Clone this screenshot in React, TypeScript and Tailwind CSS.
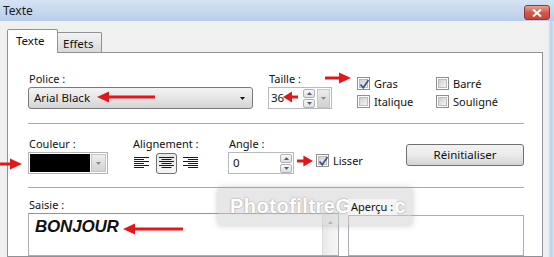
import React from 'react';

type Dir = 'left' | 'right';

function RedArrow({ len, dir }: { len: number; dir: Dir }) {
  const head = Math.min(12, len * 0.6);
  const shaft =
    dir === 'left' ? `M${head - 1} 4.5 H${len} V7.5 H${head - 1} Z` : `M0 4.5 H${len - head + 1} V7.5 H0 Z`;
  const tip =
    dir === 'left' ? `M0 6 L${head} 0.5 L${head} 11.5 Z` : `M${len} 6 L${len - head} 0.5 L${len - head} 11.5 Z`;
  return (
    <svg width={len} height={12} viewBox={`0 0 ${len} 12`}>
      <path d={shaft} fill="#e3161c" />
      <path d={tip} fill="#e3161c" />
    </svg>
  );
}

function CheckBox({ checked }: { checked?: boolean }) {
  return (
    <span className="relative w-[13px] h-[13px] border border-[#8f8f8f] bg-white p-px shrink-0">
      <span className="block w-full h-full bg-gradient-to-br from-[#cfcfcf] to-[#f6f6f6] border border-[#bcbcbc]" />
      {checked && (
        <svg className="absolute left-0 top-0" width="13" height="13" viewBox="0 0 13 13">
          <path d="M2.5 6.5 L5.2 9.8 L10.5 2" fill="none" stroke="#3e5594" strokeWidth="1.8" />
        </svg>
      )}
    </span>
  );
}

function Check({ label, checked }: { label: string; checked?: boolean }) {
  return (
    <div className="flex items-center gap-[4px] h-[13px] leading-none">
      <CheckBox checked={checked} />
      <span>{label}</span>
    </div>
  );
}

function TinyTri({ up, color = '#4b5f86' }: { up?: boolean; color?: string }) {
  return (
    <svg width="5" height="3" viewBox="0 0 5 3">
      <path d={up ? 'M0 3 L2.5 0 L5 3 Z' : 'M0 0 L2.5 3 L5 0 Z'} fill={color} />
    </svg>
  );
}

function Spinner() {
  return (
    <div className="flex flex-col gap-px py-px">
      <div className="w-[12px] h-[9px] border border-[#b2b2b2] rounded-[2px] bg-gradient-to-b from-[#f8f8f8] to-[#dedede] flex items-center justify-center">
        <TinyTri up />
      </div>
      <div className="w-[12px] h-[9px] border border-[#b2b2b2] rounded-[2px] bg-gradient-to-b from-[#f8f8f8] to-[#dedede] flex items-center justify-center">
        <TinyTri />
      </div>
    </div>
  );
}

function AlignIcon({ mode }: { mode: 'left' | 'center' | 'right' }) {
  const rows = [0, 1, 2, 3, 4, 5];
  return (
    <svg width="15" height="12" viewBox="0 0 15 12">
      {rows.map((i) => {
        const w = i % 2 === 0 ? 15 : 10;
        const x = mode === 'left' ? 0 : mode === 'center' ? (15 - w) / 2 : 15 - w;
        return <rect key={i} x={x} y={i * 2} width={w} height={1} fill="#1a1a1a" />;
      })}
    </svg>
  );
}

export default function App() {
  return (
    <div className="relative w-[554px] h-[257px] overflow-hidden bg-[#f0f0f0] font-['Noto_Sans',sans-serif] text-[11px] text-[#111] flex flex-col">
      {/* Title bar */}
      <div className="h-[21px] shrink-0 bg-gradient-to-b from-[#d6e3f3] to-[#b8cee9] flex items-center justify-between pl-[3px] pr-[4px]">
        <span className="text-[12px] text-[#1b1b1b]">Texte</span>
        <div className="mt-[4px] w-[26px] h-[15px] rounded-[3px] border border-[#8d3a36] bg-gradient-to-b from-[#e8a393] via-[#cf5a4b] to-[#c4463a] flex items-center justify-center">
          <svg width="10" height="8" viewBox="0 0 10 8">
            <path d="M1 0.5 L9 7.5 M9 0.5 L1 7.5" stroke="#fff" strokeWidth="2" />
          </svg>
        </div>
      </div>

      <div className="flex-1 flex">
        <div className="flex-1 pl-[7px] pt-[8px] flex flex-col">
          {/* Tabs */}
          <div className="flex items-end h-[23px] relative z-10">
            <div className="w-[51px] h-[24px] -mb-px bg-white border border-b-0 border-[#8e9199] rounded-t-[2px] pl-[8px] pt-[2px] text-[11.5px]">
              Texte
            </div>
            <div className="w-[44px] h-[20px] bg-gradient-to-b from-[#f3f3f3] to-[#dadada] border border-l-0 border-b-0 border-[#8e9199] rounded-tr-[2px] pl-[5px] pt-[2px] text-[11.5px]">
              Effets
            </div>
          </div>

          {/* Panel */}
          <div className="w-[536px] flex-1 bg-white border border-[#8e9199] pl-[20px] pt-[19px] flex flex-col">
            {/* Row 1 */}
            <div className="flex h-[37px]">
              <div className="w-[225px] flex flex-col">
                <span className="h-[15px] leading-[13px] pl-px">Police :</span>
                <div className="h-[22px] rounded-[3px] border border-[#7a7a7a] bg-gradient-to-b from-[#f3f3f3] via-[#e6e6e6] to-[#d4d4d4] flex items-center justify-between pl-[5px] pr-[7px]">
                  <span className="text-[11.5px]">Arial Black</span>
                  <TinyTri color="#111" />
                </div>
              </div>
              <div className="ml-[15px] flex flex-col">
                <span className="h-[15px] leading-[13px] pl-px">Taille :</span>
                <div className="h-[22px] w-[64px] border border-[#b6b9c1] bg-white flex items-center pl-[2px] pr-px">
                  <span className="w-[33px] text-[11.5px]">36</span>
                  <Spinner />
                  <div className="ml-[2px] w-[13px] h-[19px] border border-[#c7c7c7] bg-gradient-to-b from-[#ececec] to-[#d0d0d0] flex items-center justify-center">
                    <TinyTri color="#8a8a8a" />
                  </div>
                </div>
              </div>
              <div className="ml-[25px] w-[79px] pt-[5px] flex flex-col gap-[5px]">
                <Check label="Gras" checked />
                <Check label="Italique" />
              </div>
              <div className="pt-[5px] flex flex-col gap-[5px]">
                <Check label="Barré" />
                <Check label="Souligné" />
              </div>
            </div>

            <div className="mt-[14px] w-[496px] h-px bg-[#a7a7a7]" />

            {/* Row 2 */}
            <div className="mt-[13px] flex h-[37px] w-[496px]">
              <div className="w-[80px] flex flex-col">
                <span className="h-[15px] leading-[13px] pl-px">Couleur :</span>
                <div className="h-[22px] border border-[#b3b3b3] bg-white flex items-center p-px">
                  <div className="w-[61px] h-[18px] bg-black" />
                  <div className="ml-px w-[15px] h-[18px] border border-[#c4c4c4] bg-gradient-to-b from-[#eeeeee] to-[#d3d3d3] flex items-center justify-center">
                    <TinyTri color="#888" />
                  </div>
                </div>
              </div>
              <div className="ml-[25px] w-[70px] flex flex-col">
                <span className="h-[15px] leading-[13px]">Alignement :</span>
                <div className="h-[22px] flex items-center">
                  <span className="ml-px">
                    <AlignIcon mode="left" />
                  </span>
                  <div className="ml-[7px] w-[21px] h-[21px] rounded-[3px] border border-[#6f6f6f] bg-gradient-to-b from-[#e6e6e6] to-[#f5f5f5] flex items-center justify-center">
                    <AlignIcon mode="center" />
                  </div>
                  <span className="ml-[6px]">
                    <AlignIcon mode="right" />
                  </span>
                </div>
              </div>
              <div className="ml-[25px] flex flex-col">
                <span className="h-[15px] leading-[13px] pl-px">Angle :</span>
                <div className="h-[22px] w-[66px] border border-[#b6b9c1] bg-white flex items-center pl-[4px] pr-px">
                  <span className="flex-1 text-[11.5px]">0</span>
                  <Spinner />
                </div>
              </div>
              <div className="ml-[22px] self-end mb-[7px]">
                <Check label="Lisser" checked />
              </div>
              <button className="ml-auto mt-[7px] w-[118px] h-[22px] rounded-[3px] border border-[#707070] bg-gradient-to-b from-[#f2f2f2] via-[#ebebeb] to-[#d4d4d4] text-[11.5px] leading-none">
                Réinitialiser
              </button>
            </div>

            <div className="mt-[13px] w-[496px] h-px bg-[#a7a7a7]" />

            {/* Row 3 */}
            <div className="mt-[11px] flex flex-1">
              <div className="w-[311px] flex flex-col">
                <span className="h-[14px] leading-[12px] pl-px">Saisie :</span>
                <div className="flex-1 border border-[#abadb3] border-t-[#8f949c] bg-white flex">
                  <div className="flex-1 pl-[6px] pt-[3px] font-['Liberation_Sans',sans-serif] font-black italic text-[17px] leading-[20px] tracking-[-0.2px]">
                    BONJOUR
                  </div>
                  <div className="w-[16px] bg-gradient-to-r from-[#eaeaea] to-[#f6f6f6] border-l border-[#dcdcdc] flex justify-center pt-[7px]">
                    <TinyTri up color="#9a9a9a" />
                  </div>
                </div>
              </div>
              <div className="ml-[9px] w-[176px] flex flex-col">
                <span className="relative z-20 h-[16px] leading-[16px] pl-[3px] self-start pr-[4px] bg-white/60">Aperçu :</span>
                <div className="flex-1 border border-[#abadb3] bg-white" />
              </div>
            </div>
          </div>
        </div>
        <div className="w-[6px] bg-gradient-to-r from-[#f0f0f0] via-[#b6d3e8] to-[#d6e7f4]" />
      </div>

      {/* Watermark */}
      <div className="absolute left-[218px] top-[188px] w-[194px] h-[37px] bg-[#cfcfcf]/50 rounded-[2px] shadow-[0_0_6px_rgba(160,160,160,0.6)] z-10 pl-[12px] pr-[6px] pt-[3px] flex font-['Liberation_Sans',sans-serif] font-bold text-[20px] text-white tracking-[0.5px] [text-shadow:0_0_2px_#8a8a8a]">
        <span>PhotofiltreG</span>
        <span className="ml-auto">c</span>
      </div>

      {/* Annotation arrows */}
      <div className="absolute left-[97px] top-[91px]">
        <RedArrow len={58} dir="left" />
      </div>
      <div className="absolute left-[283px] top-[91px]">
        <RedArrow len={15} dir="left" />
      </div>
      <div className="absolute left-[325px] top-[72px]">
        <RedArrow len={26} dir="right" />
      </div>
      <div className="absolute left-0 top-[158px]">
        <RedArrow len={22} dir="right" />
      </div>
      <div className="absolute left-[297px] top-[155px]">
        <RedArrow len={16} dir="right" />
      </div>
      <div className="absolute left-[123px] top-[223px]">
        <RedArrow len={60} dir="left" />
      </div>
    </div>
  );
}
